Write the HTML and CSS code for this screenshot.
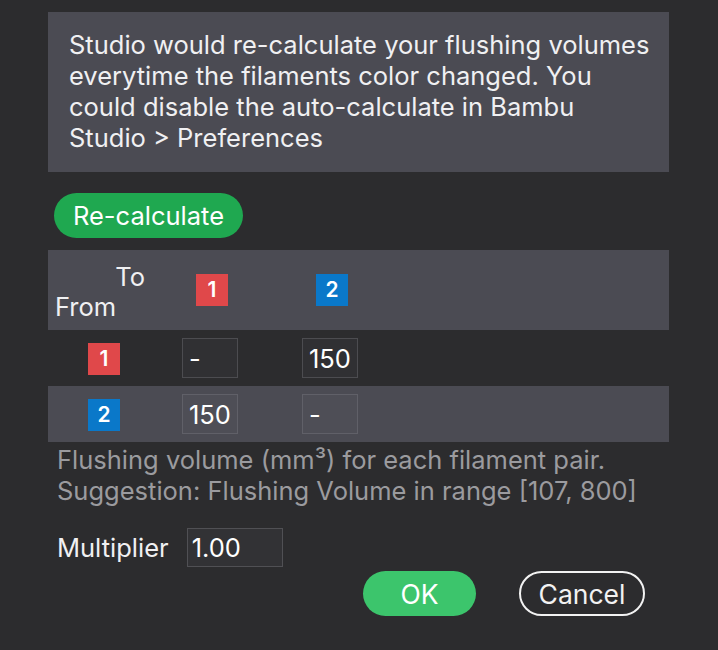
FILE: index.html
```html
<!DOCTYPE html>
<html lang="en">
<head>
    <meta charset="UTF-8">
    <title>Flushing volumes</title>
    <link rel="stylesheet" href="styles.css">
</head>
<body>
    <div class="dialog">
        <div class="tip">
            Studio would re-calculate your flushing volumes everytime the filaments color changed. You could disable the auto-calculate in Bambu Studio &gt; Preferences
        </div>

        <button class="btn-recalc">Re-calculate</button>

        <div class="matrix">
            <div class="mrow head">
                <div class="lbl">
                    <div class="to">To</div>
                    <div class="from">From</div>
                </div>
                <div class="cell"><span class="badge red">1</span></div>
                <div class="cell"><span class="badge blue">2</span></div>
            </div>
            <div class="mrow">
                <div class="lbl"><span class="badge red">1</span></div>
                <div class="cell"><input class="vol" type="text" value="-"></div>
                <div class="cell"><input class="vol" type="text" value="150"></div>
            </div>
            <div class="mrow alt">
                <div class="lbl"><span class="badge blue">2</span></div>
                <div class="cell"><input class="vol" type="text" value="150"></div>
                <div class="cell"><input class="vol" type="text" value="-"></div>
            </div>
        </div>

        <p class="note">Flushing volume (mm³) for each filament pair.<br>Suggestion: Flushing Volume in range [107, 800]</p>

        <div class="mult">
            <label for="multiplier">Multiplier</label>
            <input id="multiplier" class="mult-input" type="text" value="1.00">
        </div>

        <div class="actions">
            <button class="btn-ok">OK</button>
            <button class="btn-cancel">Cancel</button>
        </div>
    </div>
</body>
</html>
```
FILE: styles.css
```css
body {
    margin: 0;
    background-color: #2c2c2e;
    font-family: Inter, "Noto Sans", sans-serif;
    font-size: 25.5px;
    color: #f0f0f2;
}

.dialog {
    width: 621px;
    padding: 12px 0 0 48px;
}

.tip {
    background-color: #4b4b53;
    line-height: 31px;
    padding: 17px 12px 19px 21px;
}

.btn-recalc {
    display: block;
    margin: 21px 0 12px 6px;
    height: 45px;
    width: 189px;
    border: none;
    border-radius: 23px;
    background-color: #1fa850;
    color: #fff;
    font-family: inherit;
    font-size: 25.5px;
    padding: 0;
}

.mrow {
    display: flex;
    align-items: center;
    height: 56px;
}

.mrow.head {
    height: 80px;
    background-color: #4b4b53;
}

.mrow.alt {
    background-color: #4b4b53;
}

.lbl {
    width: 102px;
    box-sizing: border-box;
    padding-left: 40px;
}

.head .lbl {
    padding: 0 5px 0 7px;
    line-height: 30px;
    margin-top: 4px;
}

.to {
    text-align: right;
}

.cell {
    width: 120px;
    display: flex;
    justify-content: center;
}

.head .cell {
    padding-left: 4px;
    box-sizing: border-box;
}

.badge {
    display: inline-block;
    width: 32px;
    height: 32px;
    line-height: 32px;
    text-align: center;
    color: #fff;
    font-size: 21px;
    font-weight: 600;
}

.badge.red {
    background-color: #e0484a;
}

.badge.blue {
    background-color: #0a78c9;
}

.vol {
    width: 56px;
    height: 40px;
    box-sizing: border-box;
    border: 1px solid #4c4c50;
    background-color: #303033;
    color: #fff;
    font-family: inherit;
    font-size: 25.5px;
    padding: 0 0 0 6px;
    outline: none;
}

.alt .vol {
    background-color: #4e4e56;
    border-color: #606068;
}

.note {
    margin: 2px 0 0 9px;
    color: #9b9b9f;
    line-height: 31px;
}

.mult {
    display: flex;
    align-items: center;
    margin: 22px 0 0 9px;
}

.mult label {
    margin-right: 18px;
}

.mult-input {
    width: 96px;
    height: 39px;
    box-sizing: border-box;
    border: 1px solid #505054;
    background-color: #323235;
    color: #fff;
    font-family: inherit;
    font-size: 25.5px;
    padding: 0 0 0 4px;
    outline: none;
}

.actions {
    display: flex;
    justify-content: flex-end;
    gap: 43px;
    margin-top: 4px;
    padding-right: 24px;
}

.actions button {
    height: 45px;
    border-radius: 23px;
    font-family: inherit;
    font-size: 26.5px;
    padding: 0;
}

.btn-ok {
    width: 113px;
    background-color: #3cc56c;
    border: none;
    color: #fff;
}

.btn-cancel {
    width: 126px;
    background: transparent;
    border: 2px solid #f2f2f2;
    color: #f2f2f2;
}
```
